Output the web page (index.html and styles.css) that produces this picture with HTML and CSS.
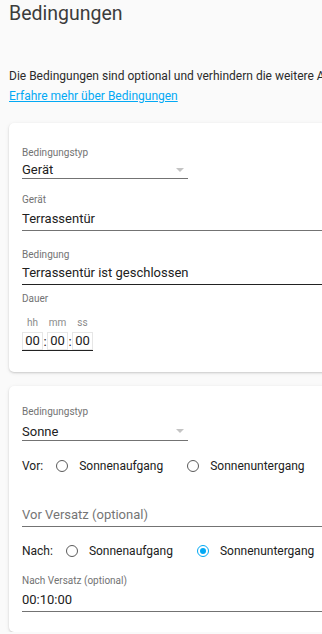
FILE: index.html
```html
<!DOCTYPE html>
<html lang="de">
<head>
  <meta charset="UTF-8">
  <title>Bedingungen</title>
  <link rel="stylesheet" href="styles.css">
</head>
<body>
  <div class="page">
    <h1 class="header">Bedingungen</h1>
    <p class="intro">Die Bedingungen sind optional und verhindern die weitere Ausführung, es sei denn, alle Bedingungen sind erfüllt.<br>
      <a href="#" class="learn">Erfahre mehr über Bedingungen</a>
    </p>

    <div class="card first-card">
      <div class="dropdown">
        <div class="label">Bedingungstyp</div>
        <div class="value">Gerät<span class="arrow"></span></div>
      </div>

      <div class="input device">
        <div class="label">Gerät</div>
        <div class="value">Terrassentür</div>
      </div>

      <div class="input state">
        <div class="label">Bedingung</div>
        <div class="value">Terrassentür ist geschlossen</div>
      </div>

      <div class="label dauer">Dauer</div>
      <div class="time">
        <div class="time-labels">
          <span>hh</span><span class="gap"></span><span>mm</span><span class="gap"></span><span>ss</span>
        </div>
        <div class="time-boxes">
          <span class="box">00</span><span class="gap">:</span><span class="box">00</span><span class="gap">:</span><span class="box">00</span>
        </div>
      </div>
    </div>

    <div class="card sun-card">
      <div class="dropdown">
        <div class="label">Bedingungstyp</div>
        <div class="value">Sonne<span class="arrow"></span></div>
      </div>

      <div class="radio-row before">
        <span class="radio-title">Vor:</span>
        <label class="radio"><span class="dot"></span>Sonnenaufgang</label>
        <label class="radio"><span class="dot"></span>Sonnenuntergang</label>
      </div>

      <div class="input offset-before">
        <div class="label"></div>
        <div class="value placeholder">Vor Versatz (optional)</div>
      </div>

      <div class="radio-row after">
        <span class="radio-title">Nach:</span>
        <label class="radio"><span class="dot"></span>Sonnenaufgang</label>
        <label class="radio"><span class="dot checked"></span>Sonnenuntergang</label>
      </div>

      <div class="input offset-after">
        <div class="label">Nach Versatz (optional)</div>
        <div class="value">00:10:00</div>
      </div>
    </div>
  </div>
</body>
</html>
```

FILE: styles.css
```css
body {
  margin: 0;
  background-color: #fafafa;
  font-family: Roboto, 'Noto Sans', sans-serif;
  color: #212121;
  overflow: hidden;
}

.page {
  width: 700px;
  padding: 0 9px;
}

.header {
  margin: 0;
  font-size: 19.5px;
  line-height: 28px;
  font-weight: 400;
  color: #3c3c3c;
}

.intro {
  margin: 38px 0 0;
  font-size: 12px;
  line-height: 20px;
  color: #2b2b2b;
  white-space: nowrap;
}

.learn {
  color: #03a9f4;
}

.card {
  margin-top: 17px;
  background: #fff;
  border-radius: 5px;
  box-shadow: 0 1px 2px rgba(0,0,0,0.14), 0 1px 4px rgba(0,0,0,0.08);
  padding: 24px 13px 21px;
}

.card + .card {
  margin-top: 14px;
}

.sun-card {
  padding-top: 20px;
  padding-bottom: 20px;
}

.label {
  font-size: 10px;
  line-height: 12px;
  height: 12px;
  color: #737373;
}

.value {
  font-size: 13px;
  color: #212121;
}

/* dropdown */
.dropdown {
  width: 166px;
  border-bottom: 1px solid #737373;
}

.dropdown .value {
  line-height: 16px;
  margin-top: 3px;
  position: relative;
}

.sun-card .dropdown .value {
  line-height: 17px;
  margin-top: 5px;
}

.arrow {
  position: absolute;
  right: 4px;
  top: 6px;
  border-left: 4px solid transparent;
  border-right: 4px solid transparent;
  border-top: 4px solid #c4c4c4;
}

/* text inputs */
.input {
  border-bottom: 1px solid #737373;
}

.input .value {
  line-height: 23px;
}

.input.device {
  margin-top: 15px;
}

.input.device .value {
  margin-top: 1px;
}

.input.state {
  margin-top: 18px;
  border-bottom-color: #222;
}

.input.offset-before {
  margin-top: 10px;
}

.input.offset-before .value {
  margin-top: 3px;
}

.input.offset-after {
  margin-top: 12px;
}

.input.offset-after .value {
  margin-top: 1px;
}

.placeholder {
  color: #757575;
}

/* duration */
.dauer {
  margin-top: 8px;
}

.time {
  margin-top: 12px;
  display: inline-block;
  border-bottom: 1px solid #222;
}

.time-labels {
  display: flex;
  font-size: 10px;
  line-height: 12px;
  color: #8a8a8a;
}

.time-labels span:not(.gap) {
  width: 21px;
  text-align: center;
}

.time-boxes {
  display: flex;
  align-items: center;
  margin-top: 3px;
  font-size: 13px;
  color: #212121;
}

.box {
  width: 21px;
  height: 18px;
  line-height: 16px;
  text-align: center;
  border: 1px solid #e6e6e6;
  box-sizing: border-box;
}

.gap {
  width: 4px;
  text-align: center;
}

/* radios */
.radio-row {
  display: flex;
  align-items: center;
  height: 24px;
  font-size: 12px;
  color: #212121;
}

.radio-row.before {
  margin-top: 13px;
}

.radio-row.after {
  margin-top: 12px;
}

.radio-title {
  margin-right: 13px;
}

.radio {
  display: flex;
  align-items: center;
  gap: 11px;
  margin-right: 24px;
}

.dot {
  width: 12px;
  height: 12px;
  border: 1.5px solid #5a5a5a;
  border-radius: 50%;
  box-sizing: border-box;
  display: flex;
  align-items: center;
  justify-content: center;
}

.dot.checked {
  border-color: #03a9f4;
}

.dot.checked::after {
  content: '';
  width: 6px;
  height: 6px;
  border-radius: 50%;
  background: #03a9f4;
}
```
